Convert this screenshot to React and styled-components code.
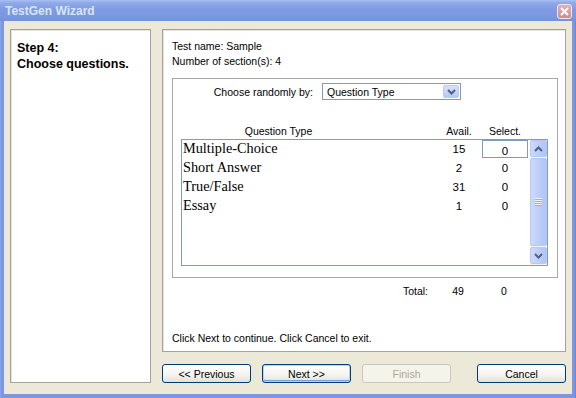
import styled, { createGlobalStyle } from 'styled-components'

const GlobalStyle = createGlobalStyle`
  html, body {
    margin: 0;
    padding: 0;
    background: #ECE9D8;
  }
  body {
    font-family: "Liberation Sans", Arial, sans-serif;
    font-size: 10.5px;
    color: #000;
  }
`;

const questionTypes = [
    { name: 'Multiple-Choice', avail: 15, select: 0 },
    { name: 'Short Answer', avail: 2, select: 0 },
    { name: 'True/False', avail: 31, select: 0 },
    { name: 'Essay', avail: 1, select: 0 },
]

const Window = styled.div`
  width: 576px;
  height: 398px;
  display: flex;
  flex-direction: column;
  background: linear-gradient(to right, #8AA5E6 0, #7B97E0 2px, #7B97E0 calc(100% - 2px), #6A86D4 100%);
  overflow: hidden;
`;

const TitleBar = styled.div`
  height: 21px;
  flex-shrink: 0;
  display: flex;
  align-items: center;
  justify-content: space-between;
  padding: 0 4px 0 5px;
  background: linear-gradient(to bottom, #A9C0F1 0, #8EA9EA 3px, #7F9CE3 9px, #7C98E1 16px, #7592DC 21px);
`;

const Title = styled.span`
  font-family: "Liberation Sans", Arial, sans-serif;
  font-weight: bold;
  font-size: 12px;
  color: #D8E4F8;
  letter-spacing: 0;
`;

const CloseButton = styled.div`
  width: 15px;
  height: 15px;
  box-sizing: border-box;
  border: 1px solid #F4E6E8;
  border-radius: 3px;
  background: linear-gradient(to bottom, #E4AFB3, #CF8C93);
  display: grid;
  place-items: center;
  margin-top: 1px;
`;

const Client = styled.div`
  flex: 1;
  margin: 0 4px 4px 4px;
  background: #ECE9D8;
  display: flex;
  gap: 11px;
  padding: 8px 6px 0 6px;
`;

const SunkenPanel = styled.div`
  box-sizing: border-box;
  background: #fff;
  border: 1px solid #A4A39B;
  box-shadow: inset 1px 1px 0 #E4E3DC;
`;

const StepPanel = styled(SunkenPanel)`
  width: 141px;
  height: 354px;
  padding: 10px 0 0 6px;
  & > h1 {
    margin: 0;
    font-family: "Liberation Sans", Arial, sans-serif;
    font-weight: bold;
    font-size: 12.5px;
    line-height: 16px;
  }
`;

const RightColumn = styled.div`
  width: 404px;
  display: flex;
  flex-direction: column;
`;

const MainPanel = styled(SunkenPanel)`
  height: 323px;
  padding: 9px 0 5px 9px;
  display: flex;
  flex-direction: column;
`;

const InfoLine = styled.div`
  line-height: 15px;
`;

const GroupBox = styled.div`
  box-sizing: border-box;
  width: 386px;
  height: 200px;
  margin-top: 9px;
  border: 1px solid #A7A6AA;
  padding: 4px 9px 0 8px;
`;

const ChooseRow = styled.div`
  display: flex;
  align-items: center;
  gap: 9px;
  height: 17px;
  & > label {
    width: 132px;
    text-align: right;
  }
`;

const Dropdown = styled.div`
  box-sizing: border-box;
  width: 139px;
  height: 17px;
  border: 1px solid #7F9DB9;
  background: #fff;
  display: flex;
  align-items: center;
  justify-content: space-between;
  padding: 0 1px 0 4px;
`;

const DropButton = styled.div`
  width: 16px;
  height: 13px;
  box-sizing: border-box;
  border: 1px solid #BBCBF2;
  border-radius: 2px;
  background: linear-gradient(to bottom, #D6E2FC, #B5C8F6);
  display: grid;
  place-items: center;
`;

const ColumnsRow = styled.div`
  display: grid;
  grid-template-columns: 1fr 46px 46px 20px;
  align-items: center;
  line-height: 14px;
  margin-top: ${p => p.$top || 0}px;
`;

const HeadCell = styled.div`
  text-align: center;
  padding-right: ${p => p.$pad || 0}px;
`;

const ListBox = styled.div`
  box-sizing: border-box;
  margin-top: 1px;
  height: 127px;
  border: 1px solid #7F9DB9;
  background: #fff;
  display: flex;
`;

const Rows = styled.div`
  flex: 1;
`;

const Row = styled.div`
  display: grid;
  grid-template-columns: 1fr 46px 46px;
  padding-right: 2px;
  height: 19px;
  align-items: center;
`;

const NameCell = styled.div`
  font-family: "Liberation Serif", "Times New Roman", serif;
  font-size: 14.3px;
  padding-left: 1px;
  line-height: 16px;
  margin-top: -3px;
`;

const NumCell = styled.div`
  text-align: center;
  font-size: 11.5px;
  box-sizing: border-box;
  height: 18px;
  line-height: ${p => (p.$edit ? 16 : 18)}px;
  border: ${p => (p.$edit ? '1px solid #7F9DB9' : 'none')};
  align-self: start;
  padding-top: ${p => (p.$edit ? 2 : 0)}px;
`;

const ScrollBar = styled.div`
  width: 17px;
  display: flex;
  flex-direction: column;
  gap: 1px;
  background: #F5F4EF;
  padding-bottom: 1px;
`;

const ScrollPiece = styled.div`
  box-sizing: border-box;
  height: ${p => (p.$grow ? 'auto' : '17px')};
  flex: ${p => (p.$grow ? 1 : '0 0 auto')};
  border: 1px solid #B5C9F5;
  border-radius: 2px;
  background: linear-gradient(to right, #CCDAFC, #BACCF9 60%, #B1C4F5);
  display: grid;
  place-items: center;
`;

const TotalRow = styled(ColumnsRow)`
  width: 366px;
  margin-left: 9px;
  margin-top: 6px;
  line-height: 15px;
`;

const TotalLabel = styled.div`
  text-align: right;
  padding-right: 7px;
`;

const Footer = styled.div`
  margin-top: auto;
  line-height: 15px;
`;

const ButtonRow = styled.div`
  display: flex;
  gap: 11px;
  margin-top: 12px;
  & > :last-child {
    margin-left: auto;
  }
`;

const Button = styled.button`
  width: 89px;
  height: 19px;
  padding: 0;
  box-sizing: border-box;
  font-family: "Liberation Sans", Arial, sans-serif;
  font-size: 10.5px;
  border-radius: 3px;
  border: 1px solid ${p => (p.disabled ? '#C9C7BA' : '#003C74')};
  color: ${p => (p.disabled ? '#ACA899' : '#000')};
  background: ${p => (p.disabled ? '#F5F4EA' : 'linear-gradient(to bottom, #FFFFFF, #F4F3EE 60%, #E3E1D6)')};
  box-shadow: ${p => (p.$default ? 'inset 0 0 0 1px #B9D1F7, inset 0 -1px 0 1px #7D9CE6' : 'none')};
`;

const Chevron = ({ up }) => (
    <svg width="9" height="6" viewBox="0 0 9 6">
        <path
            d={up ? 'M1 5 L4.5 1.5 L8 5' : 'M1 1 L4.5 4.5 L8 1'}
            fill="none"
            stroke="#4D6185"
            strokeWidth="2"
        />
    </svg>
)

const Grip = () => (
    <svg width="7" height="8" viewBox="0 0 7 8">
        {[0, 2, 4, 6].map(y => (
            <rect key={y} x="0" y={y} width="7" height="1" fill="#EEF3FE" />
        ))}
        {[1, 3, 5, 7].map(y => (
            <rect key={y} x="0" y={y} width="7" height="1" fill="#8CB0F8" />
        ))}
    </svg>
)

const App = () => {
    const totalAvail = questionTypes.reduce((sum, q) => sum + q.avail, 0)
    const totalSelect = questionTypes.reduce((sum, q) => sum + q.select, 0)
  return (
    <>
      <GlobalStyle />
      <Window>
        <TitleBar>
          <Title>TestGen Wizard</Title>
          <CloseButton>
            <svg width="9" height="9" viewBox="0 0 9 9">
              <path d="M1 1 L8 8 M8 1 L1 8" stroke="#fff" strokeWidth="2" />
            </svg>
          </CloseButton>
        </TitleBar>
        <Client>
          <StepPanel>
            <h1>Step 4:</h1>
            <h1>Choose questions.</h1>
          </StepPanel>
          <RightColumn>
            <MainPanel>
              <InfoLine>Test name: Sample</InfoLine>
              <InfoLine>Number of section(s): 4</InfoLine>
              <GroupBox>
                <ChooseRow>
                  <label>Choose randomly by:</label>
                  <Dropdown>
                    <span>Question Type</span>
                    <DropButton>
                      <Chevron />
                    </DropButton>
                  </Dropdown>
                </ChooseRow>
                <ColumnsRow $top={24}>
                  <HeadCell $pad={60}>Question Type</HeadCell>
                  <HeadCell>Avail.</HeadCell>
                  <HeadCell>Select.</HeadCell>
                </ColumnsRow>
                <ListBox>
                  <Rows>
                    {questionTypes.map((q, i) => (
                      <Row key={q.name}>
                        <NameCell>{q.name}</NameCell>
                        <NumCell>{q.avail}</NumCell>
                        <NumCell $edit={i === 0}>{q.select}</NumCell>
                      </Row>
                    ))}
                  </Rows>
                  <ScrollBar>
                    <ScrollPiece><Chevron up /></ScrollPiece>
                    <ScrollPiece $grow><Grip /></ScrollPiece>
                    <ScrollPiece><Chevron /></ScrollPiece>
                  </ScrollBar>
                </ListBox>
              </GroupBox>
              <TotalRow>
                <TotalLabel>Total:</TotalLabel>
                <HeadCell>{totalAvail}</HeadCell>
                <HeadCell>{totalSelect}</HeadCell>
              </TotalRow>
              <Footer>Click Next to continue. Click Cancel to exit.</Footer>
            </MainPanel>
            <ButtonRow>
              <Button>&lt;&lt; Previous</Button>
              <Button $default>Next &gt;&gt;</Button>
              <Button disabled>Finish</Button>
              <Button>Cancel</Button>
            </ButtonRow>
          </RightColumn>
        </Client>
      </Window>
    </>
  )
}

export default App
